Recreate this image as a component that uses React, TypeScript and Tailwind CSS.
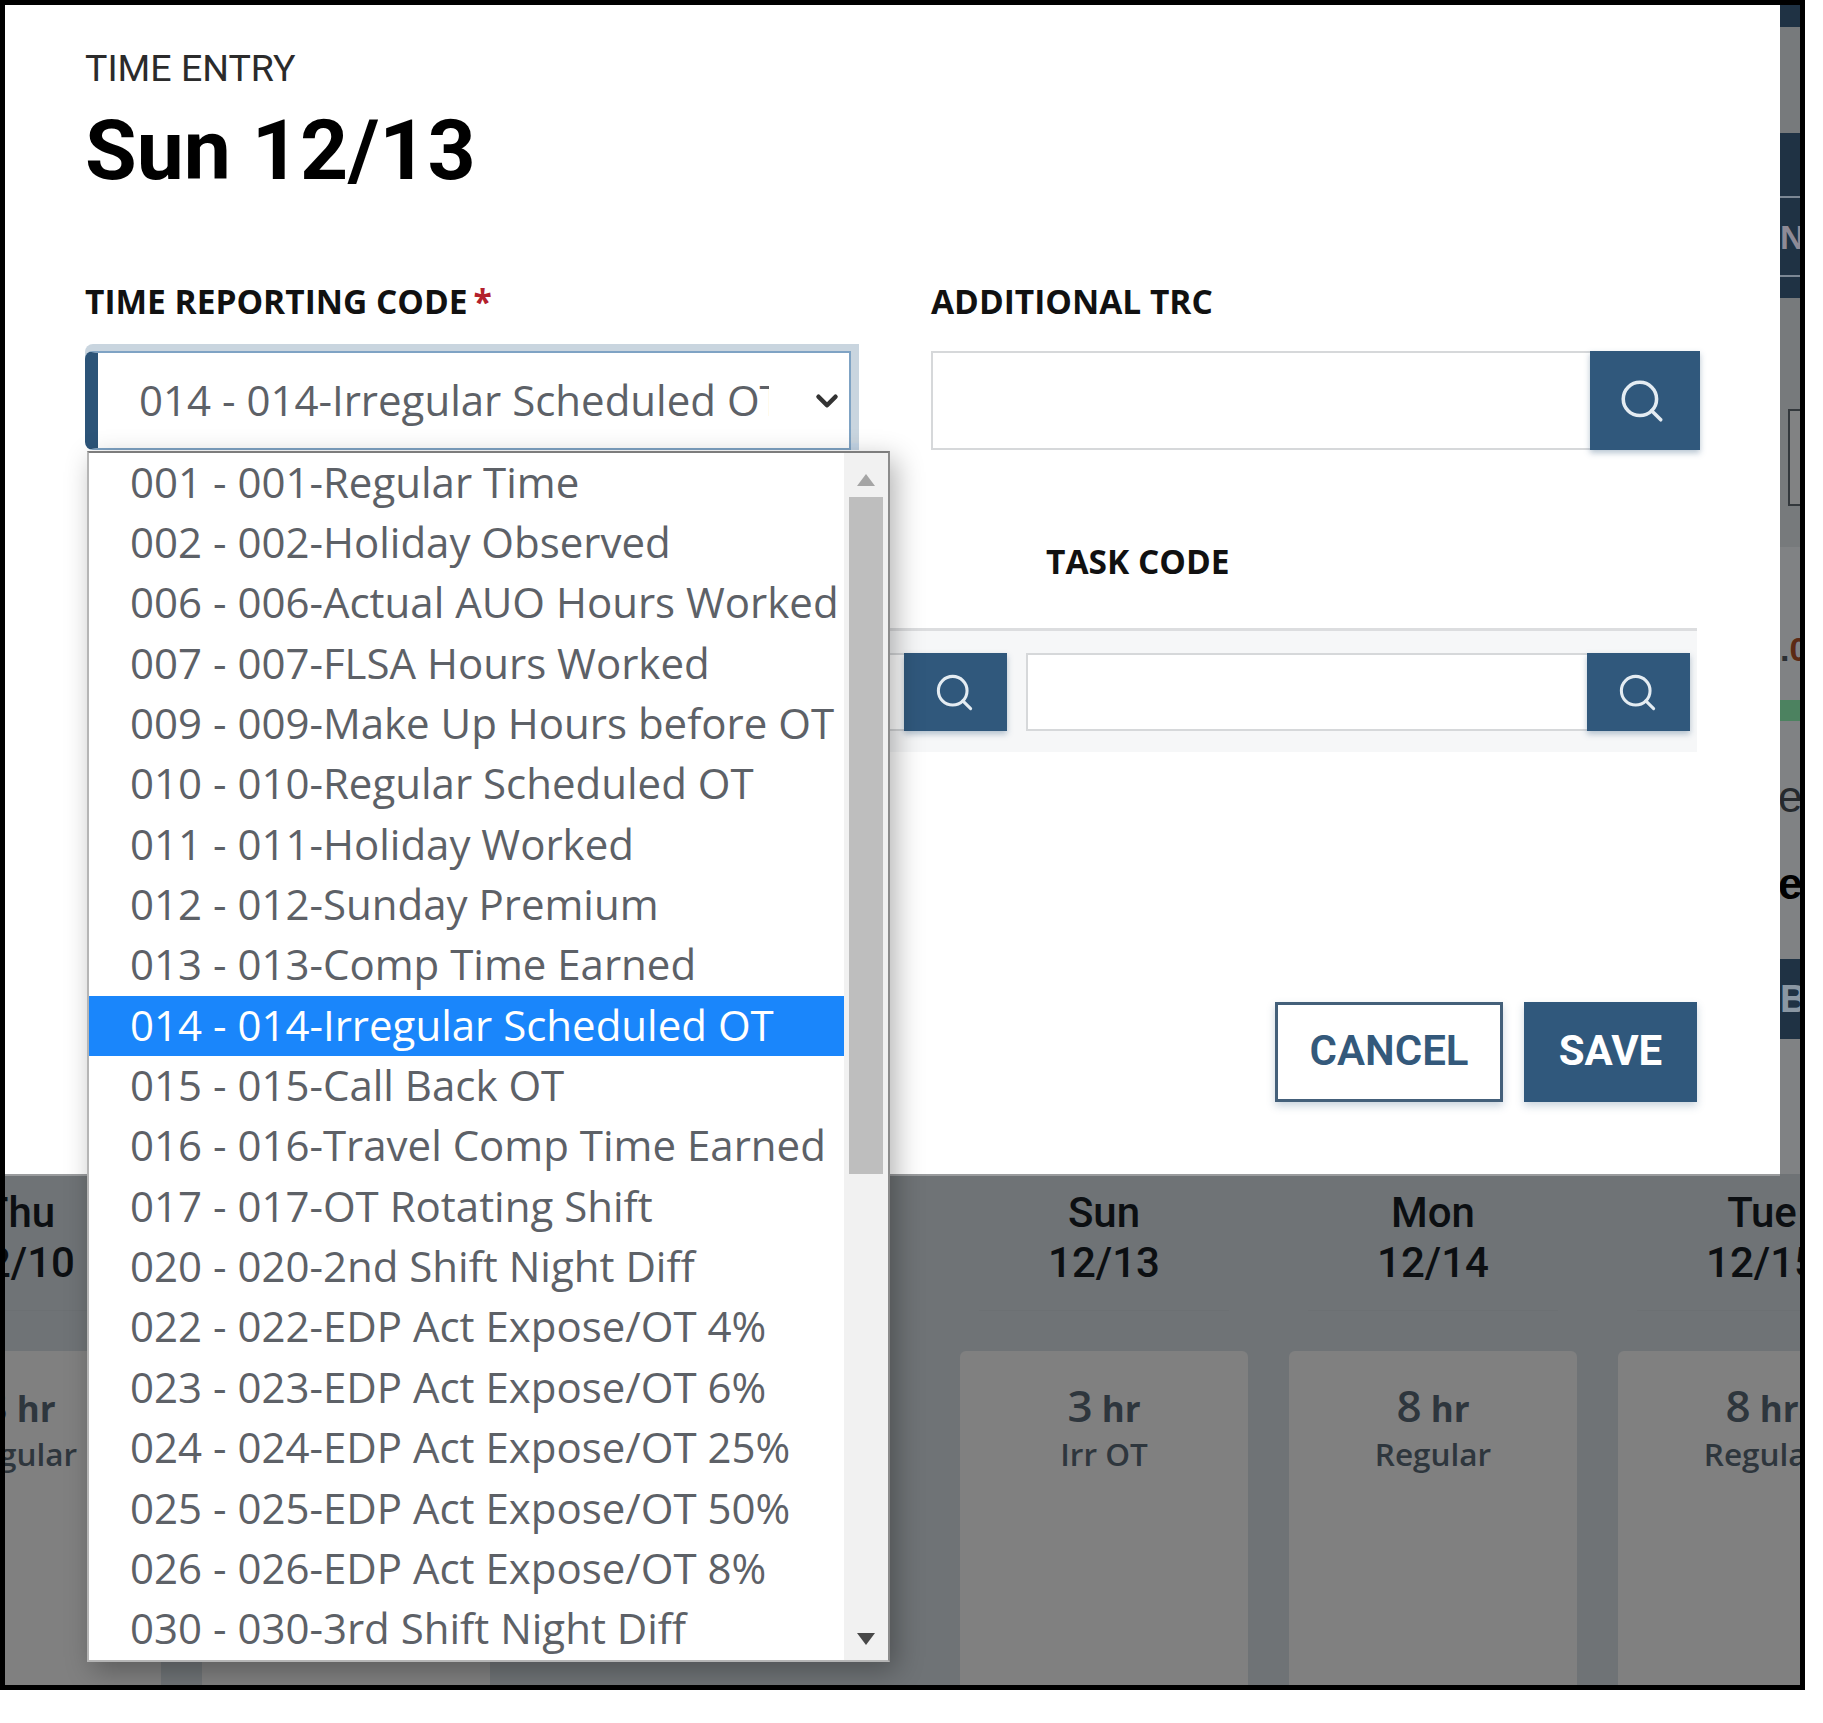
import { ChevronDown, Search } from "lucide-react";

const CODES = [
  "001 - 001-Regular Time",
  "002 - 002-Holiday Observed",
  "006 - 006-Actual AUO Hours Worked",
  "007 - 007-FLSA Hours Worked",
  "009 - 009-Make Up Hours before OT",
  "010 - 010-Regular Scheduled OT",
  "011 - 011-Holiday Worked",
  "012 - 012-Sunday Premium",
  "013 - 013-Comp Time Earned",
  "014 - 014-Irregular Scheduled OT",
  "015 - 015-Call Back OT",
  "016 - 016-Travel Comp Time Earned",
  "017 - 017-OT Rotating Shift",
  "020 - 020-2nd Shift Night Diff",
  "022 - 022-EDP Act Expose/OT 4%",
  "023 - 023-EDP Act Expose/OT 6%",
  "024 - 024-EDP Act Expose/OT 25%",
  "025 - 025-EDP Act Expose/OT 50%",
  "026 - 026-EDP Act Expose/OT 8%",
  "030 - 030-3rd Shift Night Diff",
];

const OPEN_SANS = "font-['Open_Sans',sans-serif]";
const ROBOTO = "font-['Roboto',sans-serif]";

function SearchButton({ large }: { large?: boolean }) {
  return (
    <button
      className={`flex shrink-0 items-center justify-center bg-[#30587c] shadow-[0_3px_6px_rgba(48,88,124,0.35)] ${
        large ? "h-[99px] w-[110px] pr-[6px]" : "h-[78px] w-[103px] pr-[3px]"
      }`}
    >
      <Search size={large ? 50 : 43} strokeWidth={1.7} className="text-[#e4ecf2]" />
    </button>
  );
}

function Lookup({ large, className }: { large?: boolean; className?: string }) {
  return (
    <div className={`flex ${className ?? ""}`}>
      <div className="flex-1 border-2 border-r-0 border-[#d6d8da] bg-white" />
      <SearchButton large={large} />
    </div>
  );
}

function CodeDropdown() {
  return (
    <div className="absolute left-[82px] top-[446px] z-10 flex h-[1211px] w-[803px] border-2 border-t-[#7d7d7d] border-r-[#8c8c8c] border-b-[#b5b5b5] border-l-[#b5b5b5] bg-white shadow-[6px_8px_26px_rgba(0,0,0,0.3)]">
      <ul className={`w-[755px] ${OPEN_SANS} text-[42px] text-[#5d6167]`}>
        {CODES.map((code) => (
          <li
            key={code}
            className={`flex h-[60.35px] items-center whitespace-nowrap pb-[4px] pl-[41px] ${
              code.startsWith("014") ? "bg-[#1a86fb] text-white" : ""
            }`}
          >
            {code}
          </li>
        ))}
      </ul>
      <div className="flex w-[44px] flex-col items-center bg-[#f1f1f1]">
        <svg width="20" height="14" viewBox="0 0 20 14" className="mt-[20px] mb-[10px]">
          <polygon points="10,1 19,13 1,13" fill="#a5a5a5" />
        </svg>
        <div className="h-[677px] w-[34px] bg-[#bebebe]" />
        <svg width="20" height="14" viewBox="0 0 20 14" className="mt-auto mb-[14px]">
          <polygon points="1,1 19,1 10,13" fill="#484848" />
        </svg>
      </div>
    </div>
  );
}

function Modal() {
  return (
    <div className="relative flex-1 bg-white pl-[80px] pr-[80px] pt-[39px] shadow-[0_2px_0_#9a9c9e]">
      <p className={`${ROBOTO} text-[37.5px] leading-[48px] text-[#2b2b2b]`}>TIME ENTRY</p>
      <h1 className={`${ROBOTO} mt-[14px] text-[84px] font-bold leading-[90px] text-black`}>Sun 12/13</h1>

      <div className="mt-[85px] flex gap-[80px]">
        <div className="w-[766px]">
          <label className={`${OPEN_SANS} block text-[33.5px] font-bold leading-[40px] text-[#111]`}>
            TIME REPORTING CODE<span className="ml-[6px] text-[#b3202c]">*</span>
          </label>
          <div className="mt-[30px] flex h-[99px] items-center rounded-l-[8px] border-2 border-l-[13px] border-[#7fa3c4] border-l-[#2c5478] bg-white pl-[41px] shadow-[0_-7px_0_#c9d5df,8px_-7px_0_#c9d5df,8px_0_0_#c3d4e4]">
            <span className={`${OPEN_SANS} w-[630px] overflow-hidden whitespace-nowrap pb-[2px] text-[42px] text-[#5d6167]`}>
              014 - 014-Irregular Scheduled OT
            </span>
            <ChevronDown size={34} strokeWidth={3.2} className="ml-[41px] text-[#333]" />
          </div>
        </div>
        <div className="flex-1">
          <label className={`${OPEN_SANS} block text-[33.5px] font-bold leading-[40px] text-[#111]`}>
            ADDITIONAL TRC
          </label>
          <Lookup large className="mt-[30px] h-[99px]" />
        </div>
      </div>

      <div className="mt-[91px] flex pl-[961px]">
        <label className={`${OPEN_SANS} block text-[33.5px] font-bold leading-[40px] text-[#111]`}>TASK CODE</label>
      </div>
      <div className="ml-[6px] mr-[3px] mt-[47px] flex gap-[19px] border-t-[3px] border-[#dcdddf] bg-[#f6f7f8] pb-[21px] pr-[7px] pt-[22px]">
        <Lookup className="h-[78px] w-[916px]" />
        <Lookup className="h-[78px] flex-1" />
      </div>

      <div className={`${ROBOTO} mr-[3px] mt-[250px] flex justify-end gap-[21px] text-[42px] font-bold`}>
        <button className="h-[100px] w-[228px] border-[3px] border-[#44607a] bg-white pb-[4px] font-semibold text-[#34597b] shadow-[0_4px_8px_rgba(48,88,124,0.25)]">
          CANCEL
        </button>
        <button className="h-[100px] w-[173px] bg-[#30587c] pb-[4px] text-white shadow-[0_4px_8px_rgba(48,88,124,0.25)]">
          SAVE
        </button>
      </div>

      <CodeDropdown />
    </div>
  );
}

function SideStrip() {
  const clip = "overflow-hidden whitespace-nowrap font-['Liberation_Sans',sans-serif]";
  return (
    <div className={`flex w-[20px] flex-col bg-[#777a7c] ${clip}`}>
      <div className="h-[22px] bg-[#1f3244]" />
      <div className="h-[106px]" />
      <div className="h-[165px] bg-[#1f3244] pt-[63px] text-[34px] font-bold leading-[40px] text-[#8e8a96]">
        <div className="flex h-[81px] items-center border-y-2 border-[#7b8794]">N</div>
      </div>
      <div className="h-[249px] pt-[111px]">
        <div className="ml-[8px] h-[97px] border-y-2 border-l-2 border-[#33383c] bg-[#818283]" />
      </div>
      <div className="flex-1 bg-[#808284]">
        <p className="mt-[82px] h-[40px] text-[34px] font-bold leading-[40px] text-[#2b2f33]">
          .<span className="text-[#5c2a14]">0</span>
        </p>
        <div className="mt-[31px] h-[21px] bg-[#4c8260]" />
        <p className="ml-[-2px] mt-[54px] text-[44px] leading-[44px] text-[#25292d]">e</p>
        <p className="ml-[-2px] mt-[43px] text-[44px] font-bold leading-[44px] text-black">e</p>
        <div className="mt-[53px] flex h-[80px] items-center bg-[#1f3244] text-[38px] font-bold text-[#8a97a3]">B</div>
      </div>
    </div>
  );
}

function DayColumn({
  day,
  date,
  hours,
  kind,
  width = "w-[288px]",
}: {
  day: string;
  date: string;
  hours: string;
  kind: string;
  width?: string;
}) {
  return (
    <div className={`flex shrink-0 flex-col items-center ${width}`}>
      <div className={`${ROBOTO} flex h-[123px] w-[250px] flex-col items-center whitespace-nowrap border-b border-[#6c7073] text-[42px] font-medium leading-[50px] text-[#0c0f12]`}>
        <span>{day}</span>
        <span>{date}</span>
      </div>
      <div className="mt-[40px] flex h-[340px] w-full flex-col items-center rounded-t-[6px] bg-[#808080] pt-[29px] text-[#2e363d]">
        <p className={`${OPEN_SANS} whitespace-nowrap text-[35px] font-bold leading-[50px]`}>
          <span className="text-[44px] font-semibold">{hours}</span> hr
        </p>
        <p className={`${OPEN_SANS} whitespace-nowrap text-[31.5px] font-semibold leading-[40px]`}>{kind}</p>
      </div>
    </div>
  );
}

export default function App() {
  return (
    <div className="h-[1723px] w-[1823px] bg-white">
      <div className="flex h-[1690px] w-[1805px] flex-col overflow-hidden border-[5px] border-black bg-[#6f7376]">
        <div className="flex h-[1169px] shrink-0">
          <Modal />
          <SideStrip />
        </div>
        <div className="ml-[-128px] flex gap-[41px] pt-[14px]">
          <DayColumn day="Thu" date="12/10" hours="8" kind="Regular" width="w-[284px]" />
          <div className="mt-[163px] h-[340px] w-[288px] shrink-0 bg-[#808080]" />
          <div className="w-[388px] shrink-0" />
          <DayColumn day="Sun" date="12/13" hours="3" kind="Irr OT" />
          <DayColumn day="Mon" date="12/14" hours="8" kind="Regular" />
          <DayColumn day="Tue" date="12/15" hours="8" kind="Regular" />
        </div>
      </div>
    </div>
  );
}
